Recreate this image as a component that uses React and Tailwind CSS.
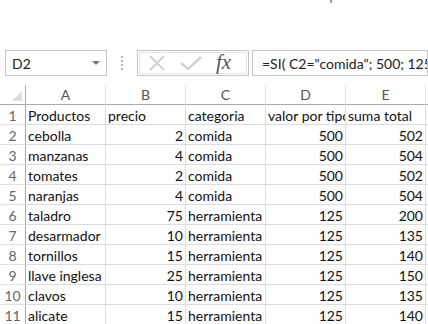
import React from 'react';

const rows = [
  ['Productos', 'precio', 'categoria', 'valor por tipo', 'suma total'],
  ['cebolla', 2, 'comida', 500, 502],
  ['manzanas', 4, 'comida', 500, 504],
  ['tomates', 2, 'comida', 500, 502],
  ['naranjas', 4, 'comida', 500, 504],
  ['taladro', 75, 'herramienta', 125, 200],
  ['desarmador', 10, 'herramienta', 125, 135],
  ['tornillos', 15, 'herramienta', 125, 140],
  ['llave inglesa', 25, 'herramienta', 125, 150],
  ['clavos', 10, 'herramienta', 125, 135],
  ['alicate', 15, 'herramienta', 125, 140],
];

const cols = ['A', 'B', 'C', 'D', 'E'];

function Cell({ value }) {
  const num = typeof value === 'number';
  return (
    <div
      className={`w-[80px] h-[20px] shrink-0 border-r border-b border-[#dadcdd] px-[2px] leading-[21px] whitespace-nowrap overflow-hidden text-[14px] text-[#111] ${
        num ? 'text-right' : 'text-left'
      }`}
    >
      {value}
    </div>
  );
}

export default function App() {
  return (
    <div className="w-[428px] h-[324px] bg-white overflow-hidden relative" style={{ fontFamily: 'Lato, "Liberation Sans", sans-serif' }}>
      <div className="absolute left-[330px] top-0 w-[2px] h-[3px] bg-[#9a9a9a]" />

      {/* formula bar */}
      <div className="flex items-center h-[26px] mt-[50px] pl-[5px]">
        <div className="w-[102px] h-[26px] border border-[#c6c6c6] flex items-center justify-between pl-[6px] pr-[6px] text-[14px] text-[#222]">
          <span>D2</span>
          <span className="w-0 h-0 border-l-[4px] border-r-[4px] border-t-[4px] border-l-transparent border-r-transparent border-t-[#777]" />
        </div>
        <div className="w-[30px] flex flex-col items-center gap-[2px]">
          <span className="w-[2px] h-[2px] bg-[#b5b5b5]" />
          <span className="w-[2px] h-[2px] bg-[#b5b5b5]" />
          <span className="w-[2px] h-[2px] bg-[#b5b5b5]" />
          <span className="w-[2px] h-[2px] bg-[#b5b5b5]" />
        </div>
        <div className="w-[112px] h-[26px] border border-[#c6c6c6] p-[1px] flex">
          <div className="flex-1 border border-[#e6e6e6] flex items-center pl-[8px] gap-[14px]">
            <svg width="18" height="16" viewBox="0 0 18 16">
              <path d="M2 1 L16 15 M16 1 L2 15" stroke="#d2d2d2" strokeWidth="2" fill="none" />
            </svg>
            <svg width="22" height="16" viewBox="0 0 22 16">
              <path d="M1 8 L8 14 L21 2" stroke="#d2d2d2" strokeWidth="2.4" fill="none" />
            </svg>
            <span className="text-[21px] italic text-[#555] leading-none -mt-[2px]" style={{ fontFamily: '"Liberation Serif", serif' }}>fx</span>
          </div>
        </div>
        <div className="w-[3px]" />
        <div className="flex-1 h-[26px] border border-[#c6c6c6] flex items-center pl-[9px] text-[14px] text-[#222] whitespace-nowrap overflow-hidden">
          =SI( C2="comida"; 500; 125 )
        </div>
      </div>

      {/* grid */}
      <div className="mt-[9px]">
        <div className="flex h-[20px]">
          <div className="w-[26px] h-[20px] shrink-0 border-r border-b border-[#ababab] relative">
            <svg className="absolute right-[3px] bottom-[3px]" width="10" height="10" viewBox="0 0 10 10">
              <path d="M10 0 L10 10 L0 10 Z" fill="#dcdcdc" />
            </svg>
          </div>
          {cols.map((c) => (
            <div key={c} className="w-[80px] h-[20px] shrink-0 border-r border-b border-r-[#e1e1e1] border-b-[#ababab] text-center leading-[20px] text-[14px] text-[#555]">
              {c}
            </div>
          ))}
          <div className="flex-1 border-b border-[#ababab]" />
        </div>
        {rows.map((r, i) => (
          <div key={i} className="flex h-[20px]">
            <div className="w-[26px] h-[20px] shrink-0 border-r border-b border-r-[#ababab] border-b-[#e1e1e1] text-center leading-[21px] text-[14px] text-[#666]">
              {i + 1}
            </div>
            {r.map((v, j) => (
              <Cell key={j} value={v} />
            ))}
            <div className="flex-1 border-b border-[#dadcdd]" />
          </div>
        ))}
      </div>
    </div>
  );
}
